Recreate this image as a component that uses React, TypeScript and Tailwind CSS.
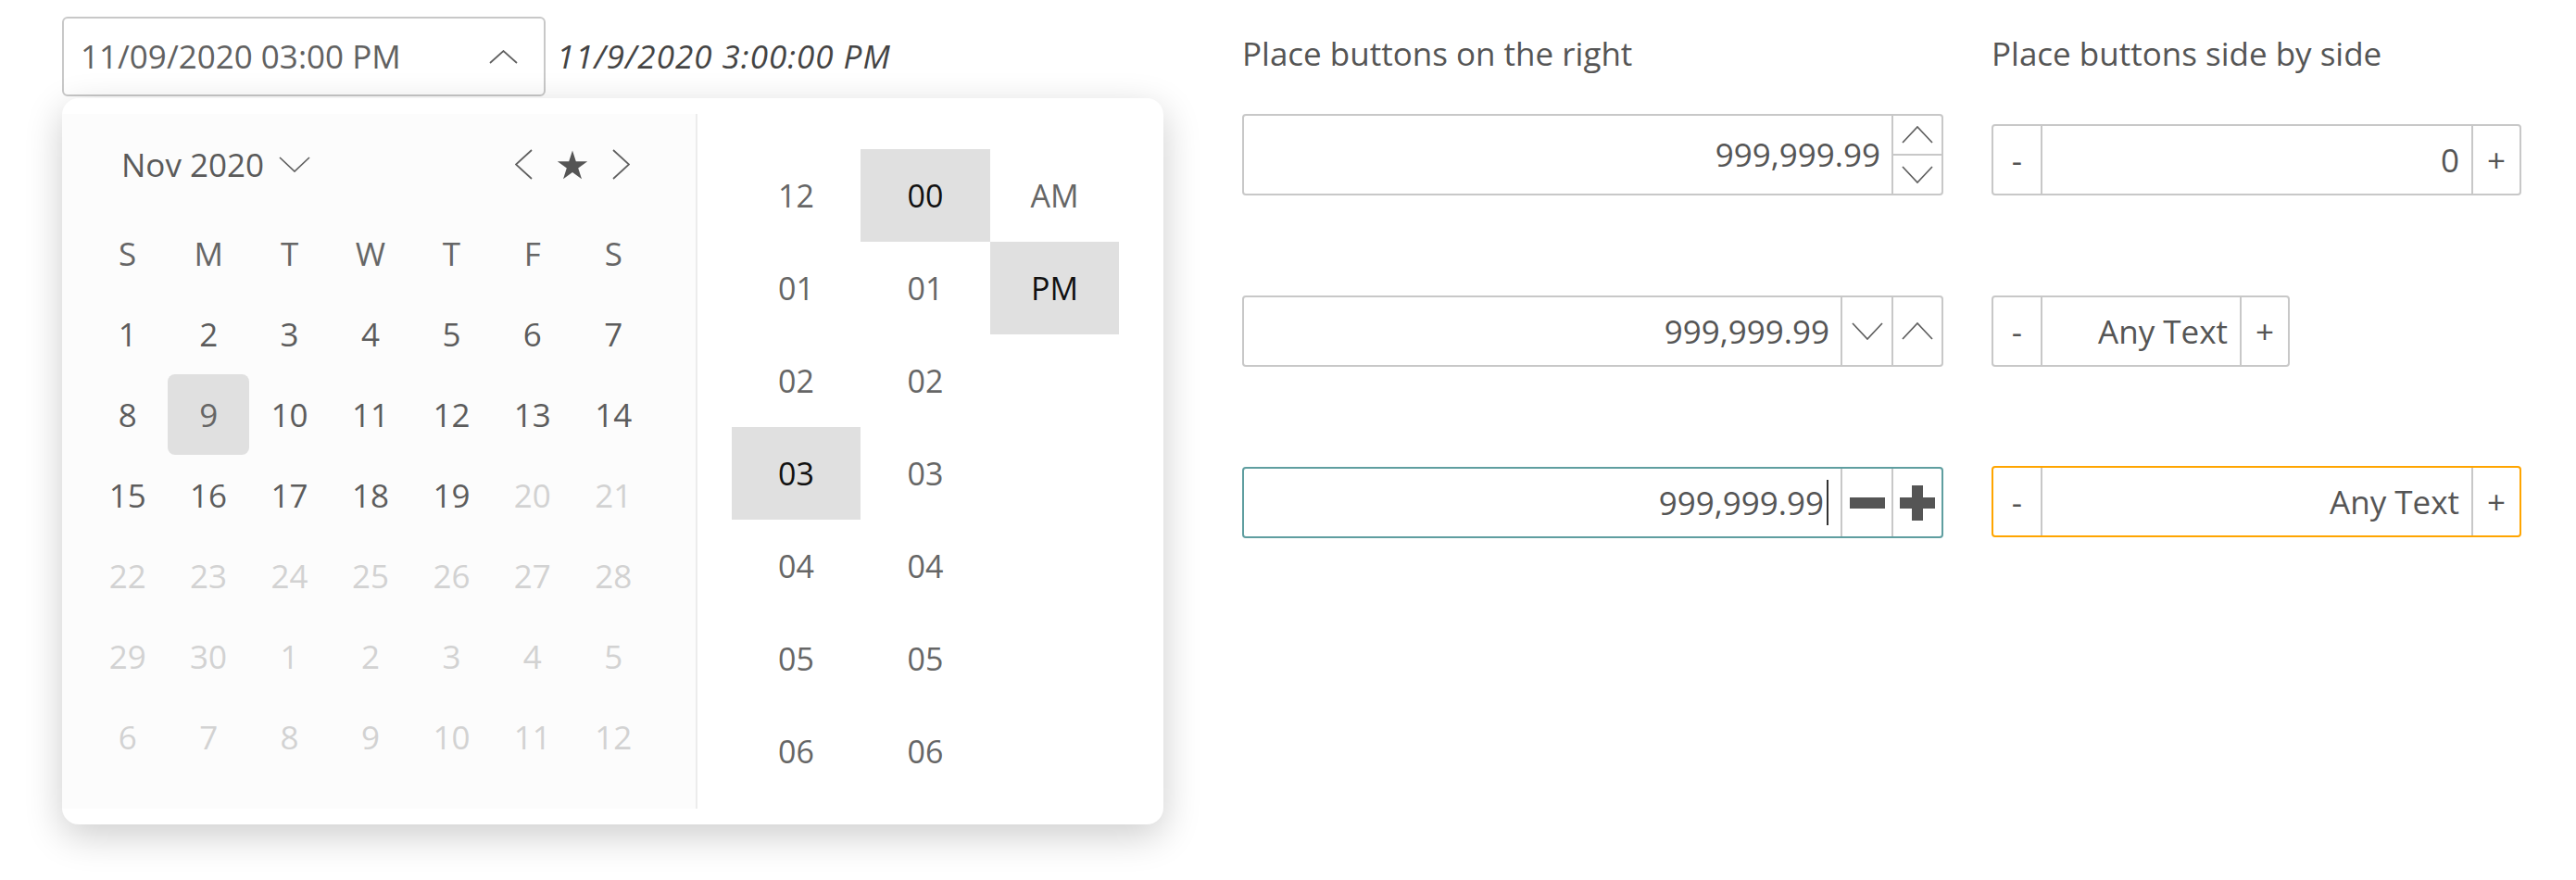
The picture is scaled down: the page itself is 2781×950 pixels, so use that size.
import React from "react";

type Dir = "up" | "down" | "left" | "right";

function Chevron({ dir, w, h, color = "#5f5f5f" }: { dir: Dir; w: number; h: number; color?: string }) {
	const points = {
		up: `1,${h - 1} ${w / 2},1 ${w - 1},${h - 1}`,
		down: `1,1 ${w / 2},${h - 1} ${w - 1},1`,
		left: `${w - 1},1 1,${h / 2} ${w - 1},${h - 1}`,
		right: `1,1 ${w - 1},${h / 2} 1,${h - 1}`,
	}[dir];
	return (
		<svg width={w} height={h} viewBox={`0 0 ${w} ${h}`} fill="none">
			<polyline points={points} stroke={color} strokeWidth={1.7} />
		</svg>
	);
}

function Star() {
	return (
		<svg width="34" height="32" viewBox="0 0 34 32">
			<polygon
				points="17,0.5 20.8,12.2 33.2,12.2 23.2,19.5 27,31.2 17,24 7,31.2 10.8,19.5 0.8,12.2 13.2,12.2"
				fill="#555"
			/>
		</svg>
	);
}

const weeks = [
	[1, 2, 3, 4, 5, 6, 7],
	[8, 9, 10, 11, 12, 13, 14],
	[15, 16, 17, 18, 19, 20, 21],
	[22, 23, 24, 25, 26, 27, 28],
	[29, 30, 1, 2, 3, 4, 5],
	[6, 7, 8, 9, 10, 11, 12],
];

const hours = ["12", "01", "02", "03", "04", "05", "06"];
const minutes = ["00", "01", "02", "03", "04", "05", "06"];

function Calendar() {
	return (
		<div className="h-full w-[684px] shrink-0 bg-[#fcfcfc] pl-[27px] pt-[11px]">
			<div className="flex h-[87px] w-[612px] items-center justify-between pl-[37px] pr-[26px]">
				<div className="flex items-center text-[#5a5a5a]">
					<span>Nov 2020</span>
					<span className="ml-[16px] flex">
						<Chevron dir="down" w={34} h={17} />
					</span>
				</div>
				<div className="flex items-center gap-[26px]">
					<Chevron dir="left" w={19} h={33} />
					<Star />
					<Chevron dir="right" w={19} h={33} />
				</div>
			</div>
			<div className="mt-[9px] grid w-[612px] grid-cols-7">
				{["S", "M", "T", "W", "T", "F", "S"].map((d, i) => (
					<div key={i} className="flex h-[87px] items-center justify-center text-[#666]">
						{d}
					</div>
				))}
				{weeks.map((week, r) =>
					week.map((day, c) => {
						const active = r < 2 || (r === 2 && c < 5);
						const selected = r === 1 && c === 1;
						return (
							<div
								key={`${r}-${c}`}
								className={
									selected
										? "flex h-[87px] items-center justify-center rounded-[8px] bg-[#e0e0e0] text-[#666]"
										: active
											? "flex h-[87px] items-center justify-center text-[#5c5c5c]"
											: "flex h-[87px] items-center justify-center text-[#d2d2d2]"
								}
							>
								{day}
							</div>
						);
					}),
				)}
			</div>
		</div>
	);
}

function TimeColumn({ items, selected, width }: { items: string[]; selected: string; width: string }) {
	return (
		<div className={width}>
			{items.map((t) => (
				<div
					key={t}
					className={
						t === selected
							? "flex h-[100px] items-center justify-center bg-[#e0e0e0] text-[#111]"
							: "flex h-[100px] items-center justify-center text-[#666]"
					}
				>
					{t}
				</div>
			))}
		</div>
	);
}

function DateTimePicker() {
	return (
		<div className="relative w-[1274px] shrink-0">
			<div className="flex items-center">
				<div className="flex h-[86px] w-[522px] items-center justify-between rounded-[6px] border-2 border-[#c8c8c8] pl-[18px] pr-[28px] text-[#616161]">
					<span>11/09/2020 03:00 PM</span>
					<Chevron dir="up" w={31} h={15} />
				</div>
				<span className="ml-[12px] italic tracking-[1px] text-[#444]">11/9/2020 3:00:00 PM</span>
			</div>

			{/* dropdown */}
			<div className="absolute left-0 top-[88px] z-10 flex h-[784px] w-[1189px] rounded-[18px] bg-white py-[17px] shadow-[0_12px_40px_rgba(0,0,0,0.2)]">
				<Calendar />
				<div className="w-[2px] shrink-0 bg-[#ececec]" />
				<div className="flex pl-[37px] pt-[38px] text-[34px]">
					<TimeColumn items={hours} selected="03" width="w-[139px]" />
					<TimeColumn items={minutes} selected="00" width="w-[140px]" />
					<TimeColumn items={["AM", "PM"]} selected="PM" width="w-[139px]" />
				</div>
			</div>
		</div>
	);
}

function Minus() {
	return (
		<svg width="38" height="12" viewBox="0 0 38 12">
			<rect width="38" height="12" fill="#555" />
		</svg>
	);
}

function Plus() {
	return (
		<svg width="38" height="38" viewBox="0 0 38 38">
			<rect x="0" y="13" width="38" height="12" fill="#555" />
			<rect x="13" y="0" width="12" height="38" fill="#555" />
		</svg>
	);
}

function RightButtons() {
	return (
		<div className="w-[757px] shrink-0 pt-[16px]">
			<div className="leading-[48px] text-[#555]">Place buttons on the right</div>

			<div className="mt-[41px] flex h-[88px] rounded-[4px] border-2 border-[#c8c8c8]">
				<div className="flex flex-1 items-center justify-end pr-[12px]">999,999.99</div>
				<div className="flex w-[54px] flex-col border-l-2 border-[#c8c8c8]">
					<div className="flex flex-1 items-center justify-center border-b-2 border-[#c8c8c8]">
						<Chevron dir="up" w={34} h={19} />
					</div>
					<div className="flex flex-1 items-center justify-center">
						<Chevron dir="down" w={34} h={19} />
					</div>
				</div>
			</div>

			<div className="mt-[108px] flex h-[77px] rounded-[4px] border-2 border-[#c8c8c8]">
				<div className="flex flex-1 items-center justify-end pr-[12px]">999,999.99</div>
				<div className="flex w-[55px] items-center justify-center border-l-2 border-[#c8c8c8]">
					<Chevron dir="down" w={34} h={19} />
				</div>
				<div className="flex w-[54px] items-center justify-center border-l-2 border-[#c8c8c8]">
					<Chevron dir="up" w={34} h={19} />
				</div>
			</div>

			<div className="mt-[108px] flex h-[77px] rounded-[4px] border-2 border-[#5f9ea0]">
				<div className="flex flex-1 items-center justify-end pr-[13px]">
					<span>999,999.99</span>
					<span className="ml-[3px] inline-block h-[49px] w-[2px] bg-[#333]" />
				</div>
				<div className="flex w-[55px] items-center justify-center border-l-2 border-[#c8c8c8]">
					<Minus />
				</div>
				<div className="flex w-[54px] items-center justify-center border-l-2 border-[#c8c8c8]">
					<Plus />
				</div>
			</div>
		</div>
	);
}

function Stepper({ value, width, border }: { value: string; width: string; border: string }) {
	return (
		<div className={`flex h-[77px] rounded-[4px] border-2 ${border} ${width}`}>
			<div className="flex w-[53px] items-center justify-center border-r-2 border-[#c8c8c8]">-</div>
			<div className="flex flex-1 items-center justify-end pr-[13px]">{value}</div>
			<div className="flex w-[52px] items-center justify-center border-l-2 border-[#c8c8c8]">+</div>
		</div>
	);
}

function SideBySide() {
	return (
		<div className="ml-[52px] w-[572px] shrink-0 pt-[16px]">
			<div className="leading-[48px] text-[#555]">Place buttons side by side</div>
			<div className="mt-[52px]">
				<Stepper value="0" width="w-[572px]" border="border-[#c8c8c8]" />
			</div>
			<div className="mt-[108px]">
				<Stepper value="Any Text" width="w-[322px]" border="border-[#c8c8c8]" />
			</div>
			<div className="mt-[107px]">
				<Stepper value="Any Text" width="w-[572px]" border="border-[#ffa500]" />
			</div>
		</div>
	);
}

export default function App() {
	return (
		<div className="flex h-[950px] w-[2781px] items-start bg-white pl-[67px] pt-[18px] font-['Open_Sans','Noto_Sans',sans-serif] text-[35px] leading-[48px] text-[#555]">
			<DateTimePicker />
			<RightButtons />
			<SideBySide />
		</div>
	);
}
